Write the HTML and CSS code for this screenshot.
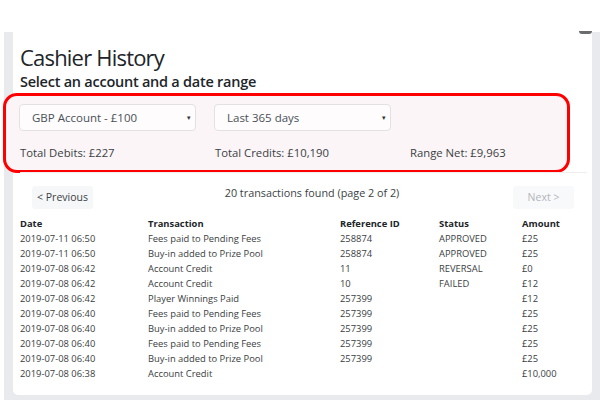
FILE: index.html
```html
<!DOCTYPE html>
<html>
<head>
<meta charset="utf-8">
<link rel="stylesheet" href="styles.css">
</head>
<body>
<div class="frame">
  <span class="corner"></span>
  <div class="card">
    <h1 class="title">Cashier History</h1>
    <h2 class="subtitle">Select an account and a date range</h2>
    <div class="annot"></div>
    <section class="filters">
      <div class="selects">
        <div class="select">GBP Account - £100<span class="caret">▾</span></div>
        <div class="select">Last 365 days<span class="caret">▾</span></div>
      </div>
      <div class="totals">
        <span>Total Debits: £227</span>
        <span>Total Credits: £10,190</span>
        <span>Range Net: £9,963</span>
      </div>
    </section>
    <div class="pager">
      <span class="btn">&lt; Previous</span>
      <span class="count">20 transactions found (page 2 of 2)</span>
      <span class="btn disabled">Next &gt;</span>
    </div>
    <div class="table">
      <div class="row head"><span>Date</span><span>Transaction</span><span>Reference ID</span><span>Status</span><span>Amount</span></div>
      <div class="row"><span>2019-07-11 06:50</span><span>Fees paid to Pending Fees</span><span>258874</span><span>APPROVED</span><span>£25</span></div>
      <div class="row"><span>2019-07-11 06:50</span><span>Buy-in added to Prize Pool</span><span>258874</span><span>APPROVED</span><span>£25</span></div>
      <div class="row"><span>2019-07-08 06:42</span><span>Account Credit</span><span>11</span><span>REVERSAL</span><span>£0</span></div>
      <div class="row"><span>2019-07-08 06:42</span><span>Account Credit</span><span>10</span><span>FAILED</span><span>£12</span></div>
      <div class="row"><span>2019-07-08 06:42</span><span>Player Winnings Paid</span><span>257399</span><span></span><span>£12</span></div>
      <div class="row"><span>2019-07-08 06:40</span><span>Fees paid to Pending Fees</span><span>257399</span><span></span><span>£25</span></div>
      <div class="row"><span>2019-07-08 06:40</span><span>Buy-in added to Prize Pool</span><span>257399</span><span></span><span>£25</span></div>
      <div class="row"><span>2019-07-08 06:40</span><span>Fees paid to Pending Fees</span><span>257399</span><span></span><span>£25</span></div>
      <div class="row"><span>2019-07-08 06:40</span><span>Buy-in added to Prize Pool</span><span>257399</span><span></span><span>£25</span></div>
      <div class="row"><span>2019-07-08 06:38</span><span>Account Credit</span><span></span><span></span><span>£10,000</span></div>
    </div>
  </div>
</div>
</body>
</html>
```
FILE: styles.css
```css
html, body {
  margin: 0;
  padding: 0;
  background: #ffffff;
  font-family: "Open Sans", "Noto Sans", sans-serif;
  color: #212529;
}
.frame {
  margin: 32px 0 0 4px;
  height: 368px;
  box-sizing: border-box;
  background: #e9eaee;
  padding: 0 8px 5px 9px;
  position: relative;
}
.corner {
  position: absolute;
  right: 8px;
  top: -1px;
  width: 13px;
  height: 3px;
  border-radius: 0 0 8px 8px;
  background: #6a6c70;
}
.card {
  background: #ffffff;
  height: 100%;
  border-radius: 0 0 5px 5px;
  padding: 0 7px;
  box-sizing: border-box;
}
.title {
  margin: 0;
  padding-top: 10px;
  font-size: 22px;
  font-weight: 400;
  line-height: 30px;
  letter-spacing: -0.8px;
  color: #212529;
}
.subtitle {
  margin: 0;
  font-size: 14.5px;
  font-weight: 600;
  line-height: 20px;
  letter-spacing: -0.25px;
  color: #212529;
}
.annot {
  position: absolute;
  left: -1px;
  top: 61px;
  width: 561px;
  height: 74px;
  border: 3px solid #ff0000;
  border-radius: 14px;
  background: #fbf5f7;
  z-index: 0;
}
.filters {
  position: relative;
  z-index: 1;
  margin-right: -2px;
  border-bottom: 1px solid #eeeeee;
  height: 81px;
  box-sizing: border-box;
  padding-top: 12px;
}
.selects {
  display: grid;
  grid-template-columns: 177px 177px;
  gap: 18px;
  margin-left: -1px;
}
.select {
  height: 27px;
  box-sizing: border-box;
  border: 1px solid #e4e1e3;
  border-radius: 4px;
  background: #fefcfd;
  font-size: 11.5px;
  line-height: 25px;
  padding-left: 12px;
  color: #495057;
  position: relative;
}
.caret {
  position: absolute;
  right: 4px;
  top: 0;
  font-size: 7px;
  color: #333;
}
.totals {
  display: grid;
  grid-template-columns: 195px 195px 195px;
  margin-top: 14px;
  font-size: 11.3px;
  line-height: 16px;
  color: #3a3f44;
}
.pager {
  display: flex;
  justify-content: space-between;
  align-items: flex-start;
  padding: 13px 11px 0 12px;
  height: 37px;
  box-sizing: border-box;
}
.btn {
  background: #f6f7f8;
  border-radius: 3px;
  width: 61px;
  height: 23px;
  line-height: 23px;
  text-align: center;
  font-size: 10.5px;
  color: #3a3f44;
}
.btn.disabled {
  color: #b3b6ba;
  background: #f8f9fa;
}
.count {
  font-size: 10.8px;
  line-height: 14px;
  color: #3a3f44;
  padding-left: 18px;
}
.table {
  margin-top: 6px;
  font-size: 9.4px;
  color: #3a3e42;
}
.row {
  display: grid;
  grid-template-columns: 128px 192px 99px 83px 60px;
  height: 15px;
  line-height: 15px;
}
.row.head {
  font-weight: 700;
  color: #212529;
}
```
